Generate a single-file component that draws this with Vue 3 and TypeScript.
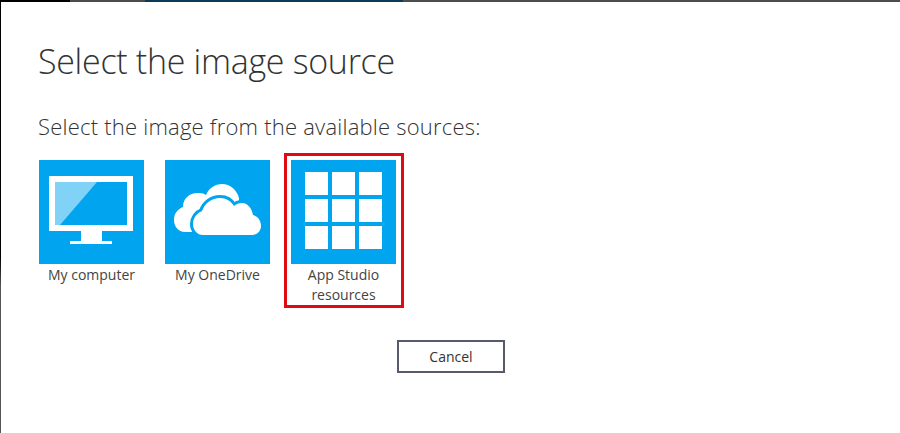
<script setup lang="ts">
const cells: number[] = [1, 2, 3, 4, 5, 6, 7, 8, 9]
</script>

<template>
  <div class="page">
    <div class="topbar">
      <span class="seg black"></span>
      <span class="seg gray1"></span>
      <span class="seg navy"></span>
      <span class="seg gray2"></span>
    </div>
    <div class="body">
      <div class="strip"></div>
      <main class="dialog">
        <h1 class="title">Select the image source</h1>
        <p class="subtitle">Select the image from the available sources:</p>
        <div class="sources">
          <div class="source">
            <div class="tile">
              <svg width="105" height="104" viewBox="0 0 105 104">
                <path fill="#fff" fill-rule="evenodd" d="M10 16H94V71H63V81H73V84H31V81H42V71H10ZM16 22V65H88V22Z" />
                <path fill="#fff" fill-opacity=".5" d="M16 22H58L21 65H16Z" />
              </svg>
            </div>
            <div class="label">My computer</div>
          </div>
          <div class="source">
            <div class="tile">
              <svg width="105" height="104" viewBox="0 0 105 104">
                <path fill="#fff" d="M20 72C13 72 9 66 9 60C9 53 13 49 18 47C18 38 25 33 32 33C35 33 38 33 41 35C44 28 50 24 57 24C65 24 72 30 74 38L74 46L30 72Z" />
                <path fill="#fff" stroke="#00a4ef" stroke-width="6" paint-order="stroke" d="M38 75C32 75 28 70 28 64C28 58 32 53 37 51C40 43 47 38 55 38C61 38 66 41 69 46C71 44 74 43 77 43C83 43 87 49 88 55C92 56 96 60 96 66C96 71 92 75 87 75Z" />
              </svg>
            </div>
            <div class="label">My OneDrive</div>
          </div>
          <div class="source selected">
            <div class="tile grid-tile">
              <div class="grid">
                <span v-for="c in cells" :key="c" class="cell"></span>
              </div>
            </div>
            <div class="label">App Studio<br />resources</div>
          </div>
        </div>
        <div class="actions">
          <button class="cancel" type="button">Cancel</button>
        </div>
      </main>
    </div>
  </div>
</template>

<style>
html, body { margin: 0; background: #fff; overflow: hidden; }
</style>

<style scoped>
.page {
  width: 900px;
  height: 433px;
  display: flex;
  flex-direction: column;
  background: #fff;
  font-family: "Open Sans", "Noto Sans", sans-serif;
  color: #333;
  overflow: hidden;
}
.topbar { height: 2px; display: flex; flex: none; }
.seg { display: block; height: 100%; }
.black { width: 70px; background: #000; }
.gray1 { width: 75px; background: #4c4c4c; }
.navy { width: 258px; background: #0b3a58; }
.gray2 { flex: 1; background: #4d4d4d; }
.body { flex: 1; display: flex; min-height: 0; }
.strip {
  width: 1px;
  flex: none;
  background: linear-gradient(#000 0, #000 255px, #555 285px, #555 100%);
}
.dialog { flex: 1; padding-left: 37px; }
.title {
  margin: 0;
  padding-top: 33px;
  font-size: 34px;
  line-height: 52px;
  font-weight: 300;
  letter-spacing: -0.3px;
  color: #333;
}
.subtitle {
  margin: 0;
  padding-top: 25px;
  font-size: 22px;
  line-height: 28px;
  font-weight: 300;
  letter-spacing: 0.22px;
  color: #333;
}
.sources {
  display: flex;
  gap: 6px;
  margin-left: -6px;
  margin-top: 13px;
}
.source {
  width: 114px;
  height: 145px;
  padding-top: 4px;
  border: 3px solid transparent;
  display: flex;
  flex-direction: column;
  align-items: flex-start;
}
.selected { border-color: #e00b12; }
.tile {
  width: 105px;
  height: 104px;
  margin-left: 4px;
  background: #00a4ef;
  flex: none;
}
.tile svg { display: block; }
.grid-tile {
  display: flex;
  justify-content: center;
  box-sizing: border-box;
  padding-top: 12px;
}
.grid {
  display: grid;
  grid-template-columns: repeat(3, 23px);
  grid-template-rows: repeat(3, 23px);
  gap: 4px;
}
.cell { background: #fff; display: block; }
.label {
  margin-top: 1px;
  margin-left: 4px;
  width: 105px;
  text-align: center;
  font-size: 14px;
  line-height: 20px;
  color: #444;
}
.actions {
  display: flex;
  padding-left: 359px;
  margin-top: 32px;
}
.cancel {
  width: 108px;
  height: 33px;
  box-sizing: border-box;
  border: 2px solid #565a6b;
  background: #fff;
  font-family: inherit;
  font-size: 14px;
  color: #333;
  padding: 0;
}
</style>
